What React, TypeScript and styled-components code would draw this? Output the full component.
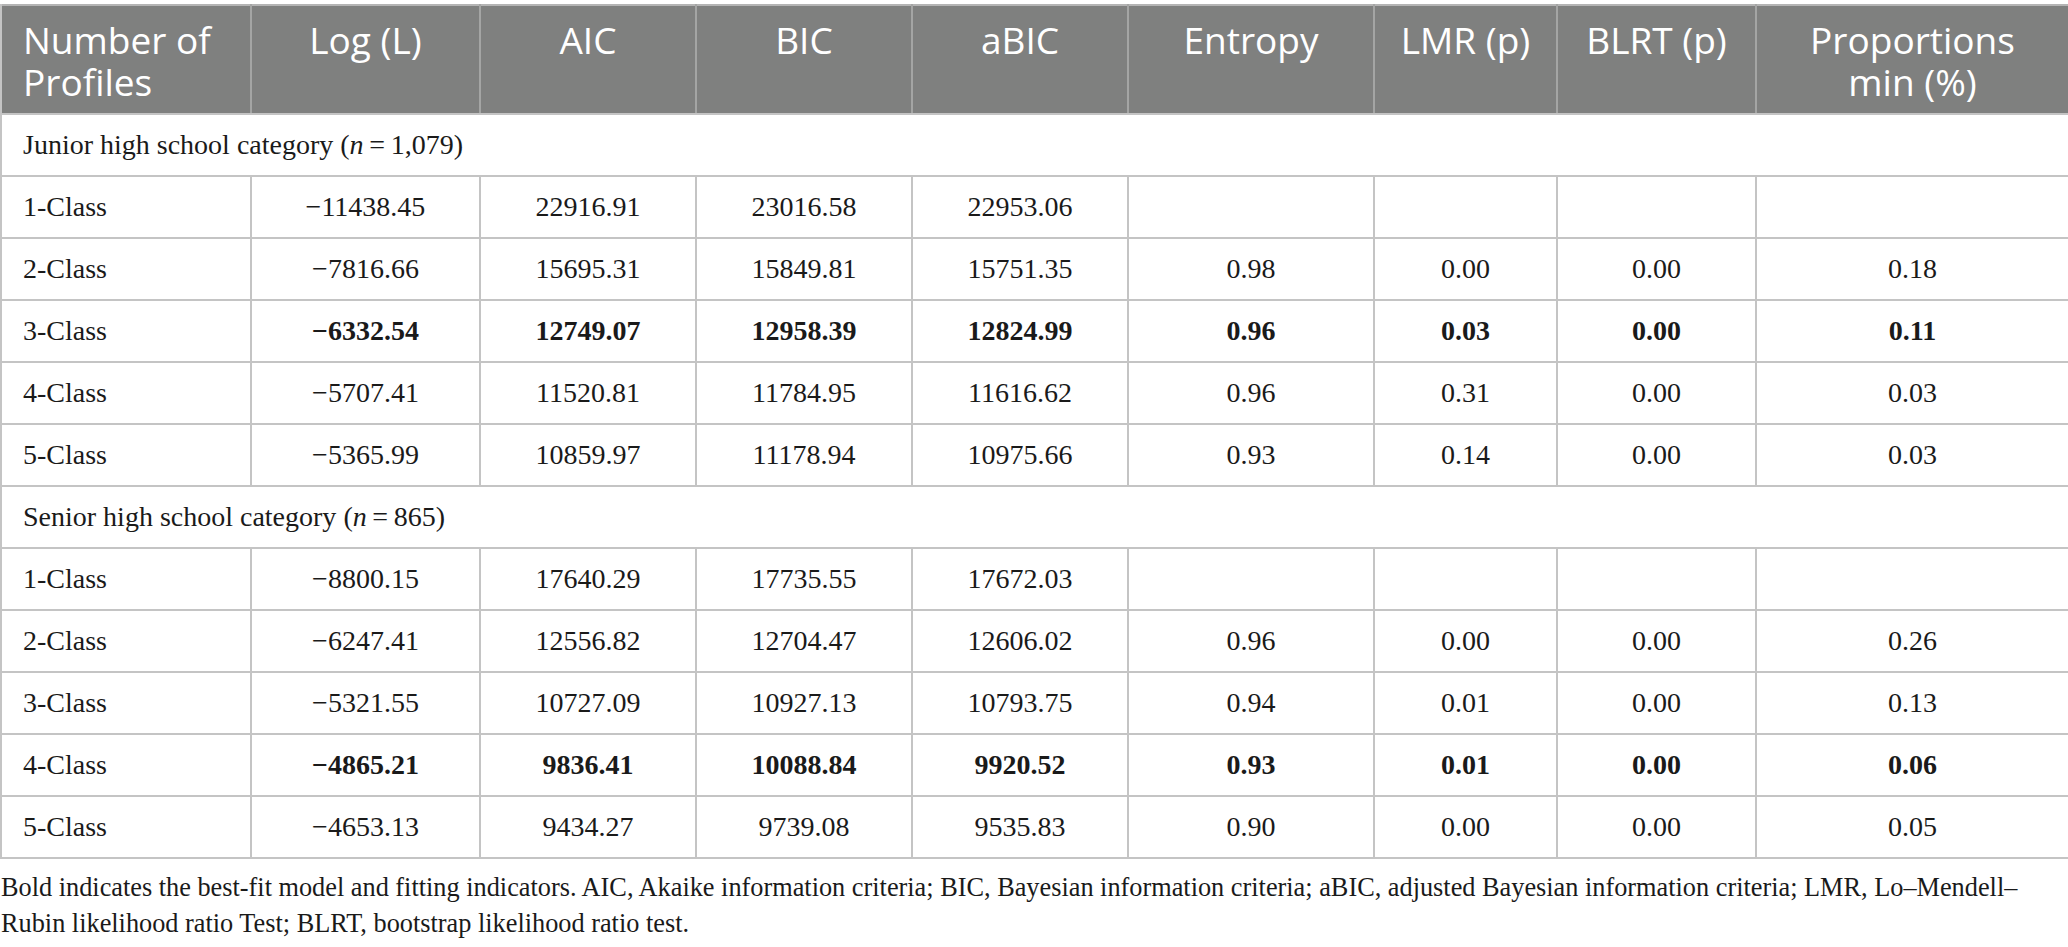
import React from "react";
import styled, { createGlobalStyle } from "styled-components";

const Global = createGlobalStyle`
  html, body { margin: 0; padding: 0; background: #ffffff; }
  body { font-family: "Liberation Serif", "Times New Roman", serif; }
`;

const Page = styled.div`
  padding-top: 4px;
  width: 2068px;
`;

const Table = styled.table`
  width: 2068px;
  table-layout: fixed;
  border-collapse: collapse;
  border: 2px solid #c4c4c4;
  border-top-color: #b4b4b4;
`;

const Col = styled.col<{ $w: number }>`
  width: ${(p) => p.$w}px;
`;

const HeadRow = styled.tr`
  background: #7f807f;
`;

const HeadCell = styled.th<{ $left?: boolean }>`
  height: 94px;
  padding: 13px 10px 0 ${(p) => (p.$left ? "21px" : "10px")};
  vertical-align: top;
  text-align: ${(p) => (p.$left ? "left" : "center")};
  font-family: "Open Sans", "Noto Sans", sans-serif;
  font-weight: 400;
  font-size: 37px;
  line-height: 42px;
  color: #ffffff;
  border-left: 2px solid #a4a5a4;
  border-right: 2px solid #a4a5a4;
  border-bottom: 2px solid #c4c4c4;
  &:first-child { border-left-color: #c4c4c4; }
  &:last-child { border-right-color: #c4c4c4; }
`;

const Row = styled.tr`
  height: 62px;
`;

const Cell = styled.td<{ $left?: boolean; $bold?: boolean }>`
  padding: 0 12px 0 ${(p) => (p.$left ? "21px" : "12px")};
  text-align: ${(p) => (p.$left ? "left" : "center")};
  vertical-align: middle;
  font-family: "Liberation Serif", "Times New Roman", serif;
  font-size: 28px;
  font-weight: ${(p) => (p.$bold ? 700 : 400)};
  color: #1a1a1a;
  border: 2px solid #c4c4c4;
`;

const GroupCell = styled.td`
  padding: 0 12px 0 21px;
  text-align: left;
  vertical-align: middle;
  font-family: "Liberation Serif", "Times New Roman", serif;
  font-size: 28px;
  color: #1a1a1a;
  border: 2px solid #c4c4c4;
`;

const Note = styled.p`
  margin: 11px 0 0 1px;
  font-family: "Liberation Serif", "Times New Roman", serif;
  font-size: 26.3px;
  line-height: 36px;
  color: #1a1a1a;
`;

type DataRow = { label: string; values: string[]; bold?: boolean };
type Group = { title: string; n: string; rows: DataRow[] };

const widths = [250, 229, 216, 216, 216, 246, 183, 199, 313];

const headers: React.ReactNode[] = [
  <>Number of<br />Profiles</>,
  "Log (L)",
  "AIC",
  "BIC",
  "aBIC",
  "Entropy",
  "LMR (p)",
  "BLRT (p)",
  <>Proportions<br />min (%)</>,
];

const groups: Group[] = [
  {
    title: "Junior high school category",
    n: "1,079",
    rows: [
      { label: "1-Class", values: ["\u221211438.45", "22916.91", "23016.58", "22953.06", "", "", "", ""] },
      { label: "2-Class", values: ["\u22127816.66", "15695.31", "15849.81", "15751.35", "0.98", "0.00", "0.00", "0.18"] },
      { label: "3-Class", bold: true, values: ["\u22126332.54", "12749.07", "12958.39", "12824.99", "0.96", "0.03", "0.00", "0.11"] },
      { label: "4-Class", values: ["\u22125707.41", "11520.81", "11784.95", "11616.62", "0.96", "0.31", "0.00", "0.03"] },
      { label: "5-Class", values: ["\u22125365.99", "10859.97", "11178.94", "10975.66", "0.93", "0.14", "0.00", "0.03"] },
    ],
  },
  {
    title: "Senior high school category",
    n: "865",
    rows: [
      { label: "1-Class", values: ["\u22128800.15", "17640.29", "17735.55", "17672.03", "", "", "", ""] },
      { label: "2-Class", values: ["\u22126247.41", "12556.82", "12704.47", "12606.02", "0.96", "0.00", "0.00", "0.26"] },
      { label: "3-Class", values: ["\u22125321.55", "10727.09", "10927.13", "10793.75", "0.94", "0.01", "0.00", "0.13"] },
      { label: "4-Class", bold: true, values: ["\u22124865.21", "9836.41", "10088.84", "9920.52", "0.93", "0.01", "0.00", "0.06"] },
      { label: "5-Class", values: ["\u22124653.13", "9434.27", "9739.08", "9535.83", "0.90", "0.00", "0.00", "0.05"] },
    ],
  },
];

export default function App() {
  return (
    <Page>
      <Global />
      <Table>
        <colgroup>
          {widths.map((w, i) => (
            <Col key={i} $w={w} />
          ))}
        </colgroup>
        <thead>
          <HeadRow>
            {headers.map((h, i) => (
              <HeadCell key={i} $left={i === 0}>
                {h}
              </HeadCell>
            ))}
          </HeadRow>
        </thead>
        <tbody>
          {groups.map((g) => (
            <React.Fragment key={g.title}>
              <Row>
                <GroupCell colSpan={9}>
                  {g.title} (<i>n</i>{"\u2009=\u2009"}{g.n})
                </GroupCell>
              </Row>
              {g.rows.map((r) => (
                <Row key={g.title + r.label}>
                  <Cell $left>{r.label}</Cell>
                  {r.values.map((v, i) => (
                    <Cell key={i} $bold={r.bold}>
                      {v}
                    </Cell>
                  ))}
                </Row>
              ))}
            </React.Fragment>
          ))}
        </tbody>
      </Table>
      <Note>
        Bold indicates the best-fit model and fitting indicators. AIC, Akaike information criteria; BIC, Bayesian
        information criteria; aBIC, adjusted Bayesian information criteria; LMR, Lo{"\u2013"}Mendell{"\u2013"}
        <br />
        Rubin likelihood ratio Test; BLRT, bootstrap likelihood ratio test.
      </Note>
    </Page>
  );
}
